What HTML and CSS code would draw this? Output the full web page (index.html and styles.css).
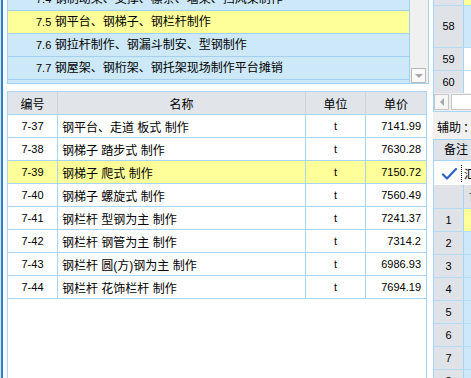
FILE: index.html
```html
<!DOCTYPE html>
<html lang="zh-CN">
  <head>
    <meta charset="UTF-8" />
    <title>定额库 - 金属结构</title>
    <link rel="stylesheet" href="styles.css">
  </head>
  <body>
    <div class="app">
      <div class="edge"></div>

      <div class="main">
        <!-- 章节列表 -->
        <div class="chapter-box">
          <ul class="chapters">
            <li><span class="no">7.4</span> 钢制动梁、支撑、檩条、墙梁、挡风架制作</li>
            <li class="current"><span class="no">7.5</span> 钢平台、钢梯子、钢栏杆制作</li>
            <li><span class="no">7.6</span> 钢拉杆制作、钢漏斗制安、型钢制作</li>
            <li><span class="no">7.7</span> 钢屋架、钢桁架、钢托架现场制作平台摊销</li>
          </ul>
          <div class="vscroll">
            <span class="btn-down"><span class="tri-down"></span></span>
          </div>
        </div>

        <!-- 定额子目 -->
        <div class="quota-box">
          <table class="quota">
            <colgroup>
              <col class="c-code">
              <col class="c-name">
              <col class="c-unit">
              <col class="c-price">
            </colgroup>
            <thead>
              <tr>
                <th>编号</th>
                <th>名称</th>
                <th>单位</th>
                <th>单价</th>
              </tr>
            </thead>
            <tbody id="quotaRows"></tbody>
          </table>
        </div>
      </div>

      <!-- 右侧面板 -->
      <div class="side">
        <div class="grid top-grid">
          <div class="grow g-first"><span class="rh"></span><span class="gc yellow"></span></div>
          <div class="grow g-tall"><span class="rh">58</span><span class="gc blue"></span></div>
          <div class="grow"><span class="rh">59</span><span class="gc"></span></div>
          <div class="grow g-last"><span class="rh">60</span><span class="gc"></span></div>
          <div class="hscroll">
            <span class="btn-left"><span class="tri-left"></span></span>
            <span class="thumb"></span>
          </div>
        </div>

        <div class="aux">辅助<span class="aux-more">：</span></div>

        <div class="note-head">备注</div>
        <div class="note-row">
          <svg class="check" width="15" height="12" viewBox="0 0 15 12">
            <path d="M1 6.5 L5 10.5 L14 1" fill="none" stroke="#2b63c6" stroke-width="2.2" stroke-linecap="round" stroke-linejoin="round"/>
          </svg>
          <span class="focus">汇总</span>
        </div>

        <div class="grid bottom-grid" id="sideRows">
          <div class="grow g-head"><span class="rh"></span><span class="gc">计算式</span></div>
        </div>
      </div>
    </div>

    <script>
      // 定额子目数据
      const quotas = [
        { code: "7-37", name: "钢平台、走道 板式 制作", unit: "t", price: "7141.99" },
        { code: "7-38", name: "钢梯子 踏步式 制作", unit: "t", price: "7630.28" },
        { code: "7-39", name: "钢梯子 爬式 制作", unit: "t", price: "7150.72", current: true },
        { code: "7-40", name: "钢梯子 螺旋式 制作", unit: "t", price: "7560.49" },
        { code: "7-41", name: "钢栏杆 型钢为主 制作", unit: "t", price: "7241.37" },
        { code: "7-42", name: "钢栏杆 钢管为主 制作", unit: "t", price: "7314.2" },
        { code: "7-43", name: "钢栏杆 圆(方)钢为主 制作", unit: "t", price: "6986.93" },
        { code: "7-44", name: "钢栏杆 花饰栏杆 制作", unit: "t", price: "7694.19" },
      ];

      const tbody = document.getElementById("quotaRows");
      quotas.forEach((q) => {
        const tr = document.createElement("tr");
        if (q.current) tr.className = "current";
        tr.innerHTML = `
          <td class="code">${q.code}</td>
          <td class="name">${q.name}</td>
          <td class="unit">${q.unit}</td>
          <td class="price">${q.price}</td>
        `;
        tbody.appendChild(tr);
      });

      // 右侧行号
      const sideRows = document.getElementById("sideRows");
      for (let i = 1; i <= 8; i++) {
        const row = document.createElement("div");
        row.className = "grow";
        row.innerHTML = `<span class="rh">${i}</span><span class="gc ${i === 1 ? "yellow" : "blue"}"></span>`;
        sideRows.appendChild(row);
      }
    </script>
  </body>
</html>
```

FILE: styles.css
```css
* {
  box-sizing: border-box;
}
body {
  margin: 0;
  width: 471px;
  height: 378px;
  overflow: hidden;
  background: #fff;
  font-family: "Liberation Sans", "Noto Sans CJK SC", sans-serif;
  font-size: 12px;
  color: #000;
}
.app {
  display: flex;
  height: 378px;
}
.edge {
  flex: none;
  width: 7px;
  background: linear-gradient(to right, #dbe5ef 0 1px, #2f7ec8 1px 3px, #f7fafd 3px 7px);
}
.main {
  flex: none;
  width: 426px;
  display: flex;
  flex-direction: column;
  background: #fff;
}

/* chapter list */
.chapter-box {
  flex: none;
  width: 422px;
  height: 84px;
  display: flex;
  border: 1px solid #a3d0f0;
  border-top: none;
  overflow: hidden;
}
.chapters {
  flex: none;
  width: 402px;
  margin: 0;
  padding: 0;
  list-style: none;
  background: #cde8f8;
  border-right: 1px solid #a3d0f0;
  overflow: hidden;
}
.chapters li {
  height: 23px;
  line-height: 22px;
  padding-left: 28px;
  border-bottom: 1px solid #a3d0f0;
  white-space: nowrap;
}
.chapters li:first-child {
  margin-top: -12px;
}
.chapters li.current {
  background: #ffff99;
}
.no {
  font-size: 11px;
}
.vscroll {
  flex: 1;
  position: relative;
  background: #f0f0f0;
}
.btn-down {
  position: absolute;
  left: 1px;
  bottom: 0;
  width: 15px;
  height: 15px;
  border: 1px solid #b9b9b9;
  background: #f9f9f9;
  display: flex;
  align-items: center;
  justify-content: center;
}
.tri-down {
  width: 0;
  height: 0;
  border-left: 4px solid transparent;
  border-right: 4px solid transparent;
  border-top: 4px solid #a8a8a8;
}

/* quota table */
.quota-box {
  flex: 1;
  width: 420px;
  margin-top: 7px;
  border: 1px solid #a9d5f5;
  border-bottom: none;
}
.quota {
  width: 100%;
  border-spacing: 0;
  table-layout: fixed;
}
.c-code {
  width: 50px;
}
.c-name {
  width: 248px;
}
.c-unit {
  width: 60px;
}
.c-price {
  width: 60px;
}
.quota th,
.quota td {
  height: 23px;
  padding: 0;
  border-right: 1px solid #a9d5f5;
  border-bottom: 1px solid #a9d5f5;
  white-space: nowrap;
  overflow: hidden;
}
.quota th {
  font-weight: normal;
  background: #e1e4e9;
  border-right-color: #cfd4da;
}
.quota th:last-child,
.quota td:last-child {
  border-right: none;
}
.quota td.code,
.quota td.unit {
  text-align: center;
  font-size: 11px;
}
.quota td.name {
  padding-left: 4px;
}
.quota td.price {
  text-align: right;
  padding-right: 5px;
  font-size: 11px;
}
.quota tr.current td {
  background: #ffff99;
}

/* side panel */
.side {
  flex: none;
  width: 120px;
  background: #f0f0f0;
}
.grid {
  border-left: 1px solid #a9d5f5;
}
.grow {
  display: flex;
  height: 23px;
  border-bottom: 1px solid #b8dcf4;
}
.grow .rh {
  flex: none;
  width: 30px;
  background: #dfe3e8;
  border-right: 1px solid #a9d5f5;
  text-align: center;
  font-size: 11px;
  line-height: 22px;
}
.grow .gc {
  flex: 1;
  background: #fff;
  line-height: 22px;
  padding-left: 4px;
  white-space: nowrap;
}
.grow .gc.blue {
  background: #cde8f8;
}
.grow .gc.yellow {
  background: #ffff99;
}
.g-first {
  height: 6px;
}
.g-tall {
  height: 42px;
}
.g-tall .rh {
  line-height: 41px;
}
.g-last {
  height: 22px;
  border-bottom: none;
}
.hscroll {
  display: flex;
  gap: 2px;
  height: 19px;
  padding: 1px 0;
  background: #f0f0f0;
  border-bottom: 1px solid #a9d5f5;
}
.btn-left {
  width: 15px;
  border: 1px solid #c6c6c6;
  background: #f6f6f6;
  display: flex;
  align-items: center;
  justify-content: center;
}
.tri-left {
  width: 0;
  height: 0;
  border-top: 4px solid transparent;
  border-bottom: 4px solid transparent;
  border-right: 4px solid #a8a8a8;
}
.thumb {
  flex: 1;
  border: 1px solid #c6c6c6;
  background: #fff;
}
.aux {
  height: 27px;
  padding: 5px 0 0 4px;
  line-height: 22px;
  white-space: nowrap;
}
.aux-more {
  margin-left: 2px;
}
.note-head {
  height: 22px;
  line-height: 20px;
  padding-left: 10px;
  background: #dfe3e8;
  border: 1px solid #a9d5f5;
  border-right: none;
}
.note-row {
  height: 24px;
  display: flex;
  align-items: center;
  gap: 4px;
  padding-left: 8px;
  background: #fff;
  border-left: 1px solid #a9d5f5;
}
.check {
  margin-top: 2px;
}
.focus {
  border-left: 1px dotted #000;
  padding-left: 2px;
  white-space: nowrap;
}
.g-head {
  height: 24px;
}
.g-head .gc {
  background: #dfe3e8;
  padding-left: 5px;
}
```
